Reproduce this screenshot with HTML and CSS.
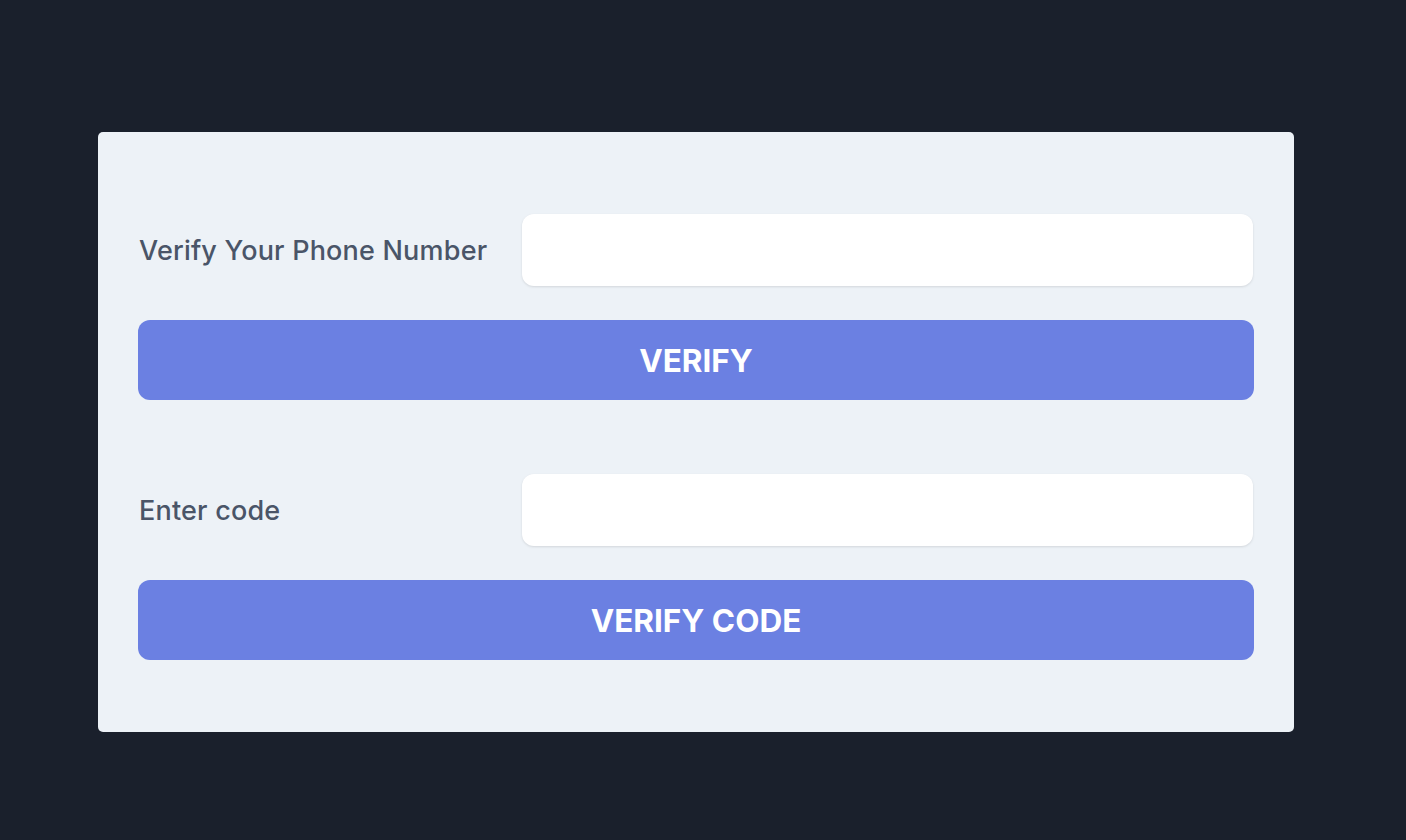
FILE: index.html
```html
<!DOCTYPE html>
<html>
<head>
<meta charset="utf-8">
<link rel="stylesheet" href="styles.css">
</head>
<body>
<div class="page">
  <div class="card">
    <div class="row">
      <label class="label">Verify Your Phone Number</label>
      <input class="field" type="text">
    </div>
    <button class="btn">VERIFY</button>
    <div class="row second">
      <label class="label">Enter code</label>
      <input class="field" type="text">
    </div>
    <button class="btn">VERIFY CODE</button>
  </div>
</div>
</body>
</html>
```
FILE: styles.css
```css
html, body {
  margin: 0;
  padding: 0;
  background: #1a202c;
  font-family: Inter, "Noto Sans", sans-serif;
}
.page {
  height: 840px;
  padding: 132px 112px 0 98px;
  box-sizing: border-box;
}
.card {
  width: 1196px;
  height: 600px;
  box-sizing: border-box;
  background: #edf2f7;
  border-radius: 5px;
  padding: 82px 40px 0 40px;
}
.row {
  display: flex;
  align-items: center;
}
.row.second {
  margin-top: 74px;
}
.label {
  width: 384px;
  flex: none;
  color: #4a5568;
  font-size: 27px;
  letter-spacing: 0.2px;
  font-weight: 500;
  padding-left: 1px;
  box-sizing: border-box;
}
.field {
  flex: 1;
  height: 72px;
  border: none;
  border-radius: 12px;
  background: #fff;
  box-shadow: 0 1px 3px rgba(0,0,0,0.08), 0 1px 2px rgba(0,0,0,0.04);
  box-sizing: border-box;
  margin-right: 1px;
  outline: none;
}
.btn {
  display: block;
  width: 100%;
  height: 80px;
  margin-top: 34px;
  border: none;
  border-radius: 12px;
  background: #6b80e2;
  color: #fff;
  font-family: Inter, "Noto Sans", sans-serif;
  font-size: 31.5px;
  font-weight: 700;
  cursor: pointer;
}
```
